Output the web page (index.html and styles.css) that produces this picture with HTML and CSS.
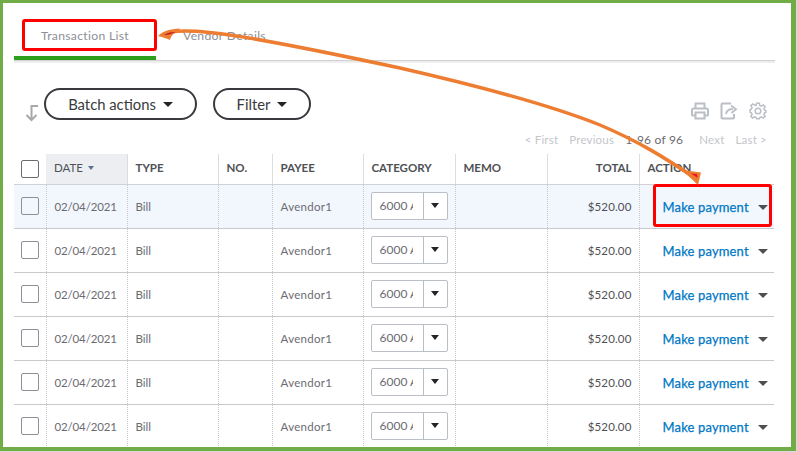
FILE: index.html
```html
<!DOCTYPE html>
<html lang="en">
<head>
<meta charset="utf-8">
<title>Transaction List</title>
<link rel="stylesheet" href="styles.css">
</head>
<body>
<div class="frame">
  <nav class="tabs">
    <div class="tab tab-active">Transaction List</div>
    <div class="tab">Vendor Details</div>
  </nav>
  <div class="toolbar">
    <svg class="sort-ic" width="16" height="18" viewBox="0 0 16 18"><path d="M14 2H7.500V16M2.500 11L7.500 16L12.500 11" fill="none" stroke="#a6a8ab" stroke-width="2"/></svg>
    <button class="pill pill-batch">Batch actions<span class="caret"></span></button>
    <button class="pill pill-filter">Filter<span class="caret"></span></button>
  </div>
  <div class="tools">
    <svg width="18" height="18" viewBox="0 0 18 18" fill="none" stroke="#babec5" stroke-width="2"><path d="M4.500 6V1.500H13.500V6M4 13.500H1.500C1 13.500 1 13 1 12.500V8C1 7 1.500 6.500 2.500 6.500H15.500C16.500 6.500 17 7 17 8V12.500C17 13 17 13.500 16.500 13.500H14"/><path d="M4.500 10.500H13.500V16.500H4.500Z"/></svg>
    <svg width="18" height="18" viewBox="0 0 18 18" fill="none" stroke="#babec5" stroke-width="2"><path d="M14 12V15.500C14 16.200 13.700 16.500 13 16.500H2.500C1.800 16.500 1.500 16.200 1.500 15.500V2.500C1.500 1.800 1.800 1.500 2.500 1.500H11"/><path d="M6 12C6.500 8.500 9 7 13 7M11 3.500L16 7.200L11.500 11" stroke-width="1.800"/></svg>
    <svg width="18" height="18" viewBox="0 0 18 18" fill="none" stroke="#babec5" stroke-width="1.500"><circle cx="9" cy="9" r="2.800"/><path d="M7.600 1.200H10.400L10.800 3.400L12.400 4.100L14.300 2.900L16.100 4.700L14.900 6.600L15.600 8.200L16.900 8.600V10.400L15.600 10.800L14.900 12.400L16.100 14.300L14.300 16.100L12.400 14.900L10.800 15.600L10.400 16.800H7.600L7.200 15.600L5.600 14.900L3.700 16.100L1.900 14.300L3.100 12.400L2.400 10.800L1.100 10.400V7.600L2.400 7.200L3.100 5.600L1.900 3.700L3.700 1.900L5.600 3.100L7.200 3.400Z"/></svg>
  </div>
  <div class="pager">
    <span class="pg-off">&lt; First</span>
    <span class="pg-off">Previous</span>
    <span class="pg-on">1-96 of 96</span>
    <span class="pg-off">Next</span>
    <span class="pg-off">Last &gt;</span>
  </div>
  <table class="grid">
    <colgroup>
      <col class="c-check"><col class="c-date"><col class="c-type"><col class="c-no"><col class="c-payee"><col class="c-cat"><col class="c-memo"><col class="c-total"><col class="c-action">
    </colgroup>
    <thead>
      <tr>
        <th class="cell-check"><span class="box box-head"></span></th>
        <th class="sorted">DATE<span class="sort-caret"></span></th>
        <th>TYPE</th><th>NO.</th><th>PAYEE</th><th>CATEGORY</th><th>MEMO</th>
        <th class="num">TOTAL</th><th>ACTION</th>
      </tr>
    </thead>
    <tbody>
      <tr class="hl"><td class="cell-check"><span class="box"></span></td><td class="date">02/04/2021</td><td>Bill</td><td></td><td class="payee">Avendor1</td><td><span class="sel"><span class="sel-val">6000 A</span><span class="sel-btn"><span class="caret caret-sm"></span></span></span></td><td></td><td class="num">$520.00</td><td class="act"><span class="pay">Make payment</span><span class="caret caret-gray"></span></td></tr>
      <tr><td class="cell-check"><span class="box"></span></td><td class="date">02/04/2021</td><td>Bill</td><td></td><td class="payee">Avendor1</td><td><span class="sel"><span class="sel-val">6000 A</span><span class="sel-btn"><span class="caret caret-sm"></span></span></span></td><td></td><td class="num">$520.00</td><td class="act"><span class="pay">Make payment</span><span class="caret caret-gray"></span></td></tr>
      <tr><td class="cell-check"><span class="box"></span></td><td class="date">02/04/2021</td><td>Bill</td><td></td><td class="payee">Avendor1</td><td><span class="sel"><span class="sel-val">6000 A</span><span class="sel-btn"><span class="caret caret-sm"></span></span></span></td><td></td><td class="num">$520.00</td><td class="act"><span class="pay">Make payment</span><span class="caret caret-gray"></span></td></tr>
      <tr><td class="cell-check"><span class="box"></span></td><td class="date">02/04/2021</td><td>Bill</td><td></td><td class="payee">Avendor1</td><td><span class="sel"><span class="sel-val">6000 A</span><span class="sel-btn"><span class="caret caret-sm"></span></span></span></td><td></td><td class="num">$520.00</td><td class="act"><span class="pay">Make payment</span><span class="caret caret-gray"></span></td></tr>
      <tr><td class="cell-check"><span class="box"></span></td><td class="date">02/04/2021</td><td>Bill</td><td></td><td class="payee">Avendor1</td><td><span class="sel"><span class="sel-val">6000 A</span><span class="sel-btn"><span class="caret caret-sm"></span></span></span></td><td></td><td class="num">$520.00</td><td class="act"><span class="pay">Make payment</span><span class="caret caret-gray"></span></td></tr>
      <tr><td class="cell-check"><span class="box"></span></td><td class="date">02/04/2021</td><td>Bill</td><td></td><td class="payee">Avendor1</td><td><span class="sel"><span class="sel-val">6000 A</span><span class="sel-btn"><span class="caret caret-sm"></span></span></span></td><td></td><td class="num">$520.00</td><td class="act"><span class="pay">Make payment</span><span class="caret caret-gray"></span></td></tr>
    </tbody>
  </table>
  <div class="mark mark-tab"></div>
  <div class="mark mark-action"></div>
  <svg class="arrow" width="797" height="452" viewBox="0 0 797 452" fill="none">
    <path d="M172 32C195 27 260 38 400 68C470 84 545 103 600 125C640 142 665 158 692 176" stroke="#ed7d31" stroke-width="3.500"/>
    <path d="M158 36C163 31 170 29 180 28.500L178 32C173 33 171 36 170 40C166 38 162 37 158 36Z" fill="#ed7d31"/>
    <path d="M164 35C167 33 171 32 176 32C172 33.500 169 35 164 35Z" fill="#b8141c"/>
    <path d="M698 185L682 170L701 172.500Z" fill="#ed7d31"/>
    <path d="M697.500 178L691 173.500L697 174Z" fill="#f0141c"/>
  </svg>
</div>
</body>
</html>
```

FILE: styles.css
```css
* { box-sizing: border-box; }
html, body { margin: 0; padding: 0; background: #d9d9d9; }
body { width: 797px; height: 452px; overflow: hidden; font-family: Lato, "Open Sans", "Liberation Sans", sans-serif; color: #393a3d; }

.frame { position: relative; width: 796px; height: 451px; background: #fff; border: solid #70ad47; border-width: 3px 5px 4px 3px; overflow: hidden; padding: 0 17px 0 11px; }

.tabs { position: relative; display: flex; width: 761px; height: 60px; padding-top: 19px; border-bottom: 3px solid #eeeeee; }
.tabs::after { content: ""; position: absolute; left: 0; right: 0; bottom: -1px; height: 1px; background: #cfd0d2; }
.tab { height: 38px; padding: 5px 0 0 27px; width: 142px; font-size: 12.200px; letter-spacing: .3px; line-height: 17px; color: #8d9096; flex: none; }
.tab + .tab { width: 140px; }
.tab-active { border-bottom: 4px solid #2ca01c; }

.toolbar { display: flex; align-items: flex-start; height: 91px; padding-top: 25px; }
.sort-ic { margin: 16px 0 0 10px; flex: none; }
.pill { height: 32px; border: 2px solid #393a3d; border-radius: 16px; background: #fff; font: inherit; font-size: 14.800px; color: #393a3d; display: flex; align-items: center; justify-content: center; gap: 7px; padding: 0; }
.pill-batch { width: 153px; margin-left: 4px; }
.pill-filter { width: 98px; margin-left: 16px; }

.caret { display: inline-block; width: 0; height: 0; border-left: 5px solid transparent; border-right: 5px solid transparent; border-top: 5px solid #232427; }
.caret-sm { border-left-width: 4px; border-right-width: 4px; border-top-width: 5px; }
.caret-gray { border-top-color: #4d4f53; }

.tools { position: absolute; top: 99px; right: 24px; display: flex; gap: 11px; }
.pager { position: absolute; top: 129px; right: 24px; display: flex; gap: 11px; font-size: 11.500px; line-height: 15px; letter-spacing: .2px; white-space: nowrap; }
.pg-off { color: #c4c6ca; }
.pg-on { color: #6b6c72; font-size: 12px; margin-right: 5px; }

.grid { table-layout: fixed; border-collapse: collapse; width: 760px; font-size: 11.500px; }
.c-check { width: 32px; } .c-date { width: 81px; } .c-type { width: 91px; } .c-no { width: 54px; } .c-payee { width: 91px; } .c-cat { width: 92px; } .c-memo { width: 92px; } .c-total { width: 92px; } .c-action { width: 135px; }
.grid th { height: 30px; padding: 0 8px 2px; text-align: left; font-size: 11.500px; font-weight: 700; color: #4f5155; border-right: 1px solid #dcdde0; border-bottom: 1px solid #d0d2d6; white-space: nowrap; }
.grid th:last-child, .grid td:last-child { border-right: 0; }
.grid th.cell-check { border-right: 0; }
.grid th.sorted { background: #eceef1; font-weight: 400; color: #4f5155; }
.sort-caret { display: inline-block; width: 0; height: 0; margin-left: 5px; vertical-align: 2px; border-left: 3.500px solid transparent; border-right: 3.500px solid transparent; border-top: 4px solid #5a7391; }
.grid td { height: 44px; padding: 0 8px; color: #6b6c72; border-right: 1px dotted #c6c8cc; border-bottom: 1px solid #c9cacd; white-space: nowrap; }
.grid td.date { letter-spacing: -.15px; }
.grid td.payee { letter-spacing: .3px; }
.grid .num { text-align: right; color: #4f5155; padding-right: 7px; }
.grid td.num { letter-spacing: .15px; }
.grid td.cell-check, .grid th.cell-check { padding: 0 0 0 7px; }
.hl td { background: #f2f7fd; }

.box { display: block; width: 18px; height: 18px; border: 1px solid #8d9096; border-radius: 2px; background: #fff; }
.hl .box { background: #f2f7fd; }
.box-head { border-color: #6b6c72; }

.sel { display: flex; width: 77px; height: 28px; margin: 0 0 1px -1px; border: 1px solid #babec5; border-radius: 2px; background: #fff; }
.sel-val { width: 41px; margin-right: 10px; padding-left: 8px; line-height: 26px; font-size: 12px; overflow: hidden; color: #6b6c72; }
.sel-btn { flex: 1; display: flex; align-items: center; justify-content: center; border-left: 1px solid #babec5; }
.grid td.act { padding: 1px 0 0 23px; }
.pay { color: #0077c5; font-size: 13px; font-weight: 400; letter-spacing: .15px; -webkit-text-stroke: .25px #0077c5; }
.act .caret { margin-left: 9px; vertical-align: 2px; }

.mark { position: absolute; border: 3px solid #fe0000; border-radius: 3px; pointer-events: none; }
.mark-tab { left: 19px; top: 16px; width: 135px; height: 32px; }
.mark-action { left: 650px; top: 181px; width: 119px; height: 43px; }
.arrow { position: absolute; left: -3px; top: -3px; pointer-events: none; }
```
